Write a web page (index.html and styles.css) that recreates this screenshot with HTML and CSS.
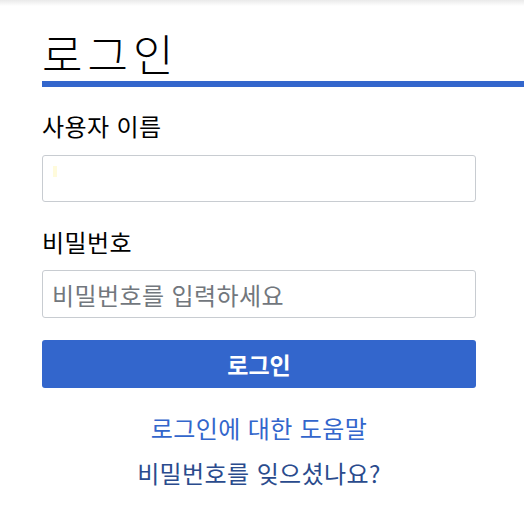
FILE: index.html
```html
<!DOCTYPE html>
<html lang="ko">
<head>
<meta charset="utf-8">
<link rel="stylesheet" href="styles.css">
</head>
<body>
<div class="topshadow"></div>
<main class="page">
  <h1 class="title">로그인</h1>
  <form class="form">
    <label class="label" for="u">사용자 이름</label>
    <div class="input"><span class="caret"></span></div>
    <label class="label label-pw" for="p">비밀번호</label>
    <div class="input input-pw placeholder">비밀번호를 입력하세요</div>
    <button class="btn" type="button">로그인</button>
  </form>
  <div class="links">
    <a class="link" href="#">로그인에 대한 도움말</a>
    <a class="link visited" href="#">비밀번호를 잊으셨나요?</a>
  </div>
</main>
</body>
</html>
```

FILE: styles.css
```css
html, body {
  margin: 0;
  padding: 0;
  background: #fff;
}
body {
  font-family: "Noto Sans CJK KR", "Noto Sans", sans-serif;
  color: #000;
}
.topshadow {
  height: 6px;
  background: linear-gradient(#eaeaea, #fff);
}
.page {
  padding: 0 0 0 42px;
}
.title {
  margin: 19px 0 0 0;
  font-weight: 300;
  font-size: 44px;
  line-height: 56px;
  letter-spacing: 5px;
  border-bottom: 6px solid #3366cc;
  padding-bottom: 0;
}
.form {
  display: flex;
  flex-direction: column;
  width: 434px;
}
.label {
  font-size: 24px;
  line-height: 30px;
  letter-spacing: 0.4px;
  margin-top: 24px;
}
.label-pw {
  margin-top: 25px;
}
.input {
  margin-top: 14px;
  height: 45px;
  border: 1px solid #c8ccd1;
  border-radius: 3px;
  font-size: 24px;
  letter-spacing: 0.4px;
  padding: 0 9px;
  display: flex;
  align-items: center;
}
.input-pw {
  margin-top: 13px;
  height: 46px;
}
.caret {
  align-self: flex-start;
  width: 4px;
  height: 11px;
  background: #fffbdc;
  margin: 10px 0 0 1px;
}
.placeholder {
  color: #72777d;
}
.btn {
  margin-top: 22px;
  height: 48px;
  border: 0;
  border-radius: 3px;
  background: #3366cc;
  color: #fff;
  font-family: inherit;
  font-weight: bold;
  font-size: 23px;
  padding: 0;
}
.links {
  width: 434px;
  display: flex;
  flex-direction: column;
  align-items: center;
  margin-top: 25px;
  gap: 15px;
}
.link {
  font-size: 24px;
  line-height: 30px;
  letter-spacing: 0.4px;
  color: #3366cc;
  text-decoration: none;
}
.link.visited {
  color: #2a4b8d;
}
```
